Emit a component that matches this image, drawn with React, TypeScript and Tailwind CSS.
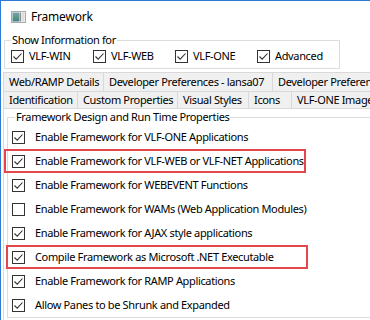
import React from "react";

const CheckBox = ({ checked }: { checked: boolean }) => (
  <span className="w-[13px] h-[13px] border border-[#333333] bg-white flex items-center justify-center shrink-0">
    {checked && (
      <svg width="11" height="11" viewBox="0 0 11 11">
        <path d="M1.5 5.5 L4.2 8.2 L9.5 2.5" fill="none" stroke="#333333" strokeWidth="1.1" />
      </svg>
    )}
  </span>
);

const WindowIcon = () => (
  <svg width="15" height="12" viewBox="0 0 15 12">
    <defs>
      <linearGradient id="pane" x1="0" y1="0" x2="0" y2="1">
        <stop offset="0" stopColor="#7aa0b8" />
        <stop offset="0.5" stopColor="#5b9a7c" />
        <stop offset="1" stopColor="#3f7f9d" />
      </linearGradient>
    </defs>
    <rect x="0.5" y="0.5" width="14" height="11" fill="#f4f4f4" stroke="#a9a9a9" />
    <rect x="1.5" y="1.5" width="7" height="9" fill="url(#pane)" />
    <rect x="9" y="1.5" width="1" height="9" fill="#8a8a8a" />
    <rect x="10.5" y="1.5" width="3" height="9" fill="#dcdcdc" />
  </svg>
);

const showFor = ["VLF-WIN", "VLF-WEB", "VLF-ONE", "Advanced"];

const tabsTop = [
  { label: "Web/RAMP Details", w: "w-[100px]" },
  { label: "Developer Preferences - lansa07", w: "w-[169px]" },
  { label: "Developer Preferences", w: "flex-1" },
];

const tabsBottom = [
  { label: "Identification", w: "w-[74px]" },
  { label: "Custom Properties", w: "w-[100px]" },
  { label: "Visual Styles", w: "w-[71px]" },
  { label: "Icons", w: "w-[43px]" },
  { label: "VLF-ONE Images", w: "flex-1" },
];

const options = [
  { label: "Enable Framework for VLF-ONE Applications", checked: true },
  { label: "Enable Framework for VLF-WEB or VLF-NET Applications", checked: true, mark: "left-[-4px]" },
  { label: "Enable Framework for WEBEVENT Functions", checked: true },
  { label: "Enable Framework for WAMs (Web Application Modules)", checked: false },
  { label: "Enable Framework for AJAX style applications", checked: true },
  { label: "Compile Framework as Microsoft .NET Executable", checked: true, mark: "left-[-2px]" },
  { label: "Enable Framework for RAMP Applications", checked: true },
  { label: "Allow Panes to be Shrunk and Expanded", checked: true },
];

export default function App() {
  return (
    <div className="w-[370px] h-[320px] overflow-hidden bg-white border-l border-t border-[#2b7bd6] flex flex-col font-['Noto_Sans',sans-serif] text-[11px] tracking-[-0.35px] leading-[16px] text-black">
      {/* title */}
      <div className="h-[31px] shrink-0 flex items-center pl-[10px] gap-[5px]">
        <WindowIcon />
        <span className="text-[12px] tracking-[-0.2px]">Framework</span>
      </div>

      {/* show information for */}
      <fieldset className="ml-[3px] w-[336px] shrink-0 border border-[#dcdcdc] pb-[5px]">
        <legend className="ml-[6px] px-[1px] leading-[16px]">Show Information for</legend>
        <div className="flex h-[14px] mt-px items-center pl-[6px]">
          {showFor.map((s) => (
            <div key={s} className="w-[82px] flex items-center gap-[5px]">
              <CheckBox checked />
              <span className="whitespace-nowrap">{s}</span>
            </div>
          ))}
        </div>
      </fieldset>

      {/* tabs */}
      <div className="mt-[3px] ml-[2px] flex flex-col flex-1 min-h-0">
        <div className="flex h-[19px] shrink-0">
          {tabsTop.map((t) => (
            <div
              key={t.label}
              className={`${t.w} shrink-0 border-l border-t border-[#d9d9d9] bg-[#f0f0f0] pl-[5px] flex items-center whitespace-nowrap overflow-hidden`}
            >
              {t.label}
            </div>
          ))}
        </div>
        <div className="flex h-[17px] shrink-0">
          {tabsBottom.map((t) => (
            <div
              key={t.label}
              className={`${t.w} shrink-0 border-l border-t border-[#d9d9d9] bg-[#f0f0f0] pl-[5px] flex items-center whitespace-nowrap overflow-hidden`}
            >
              {t.label}
            </div>
          ))}
        </div>

        {/* panel */}
        <div className="flex-1 border-l border-t border-[#d9d9d9] bg-white">
          <fieldset className="ml-[3px] w-[400px] border border-[#dcdcdc]">
            <legend className="ml-[7px] px-[1px] leading-[16px]">Framework Design and Run Time Properties</legend>
            {options.map((o) => (
              <div key={o.label} className="relative h-[24px] flex items-center pl-[4px] gap-[10px]">
                <CheckBox checked={o.checked} />
                <span className="whitespace-nowrap">{o.label}</span>
                {o.mark && (
                  <div className={`absolute ${o.mark} top-0 w-[302px] h-[24px] border-2 border-[#e2474b]`} />
                )}
              </div>
            ))}
          </fieldset>
        </div>
      </div>
    </div>
  );
}
